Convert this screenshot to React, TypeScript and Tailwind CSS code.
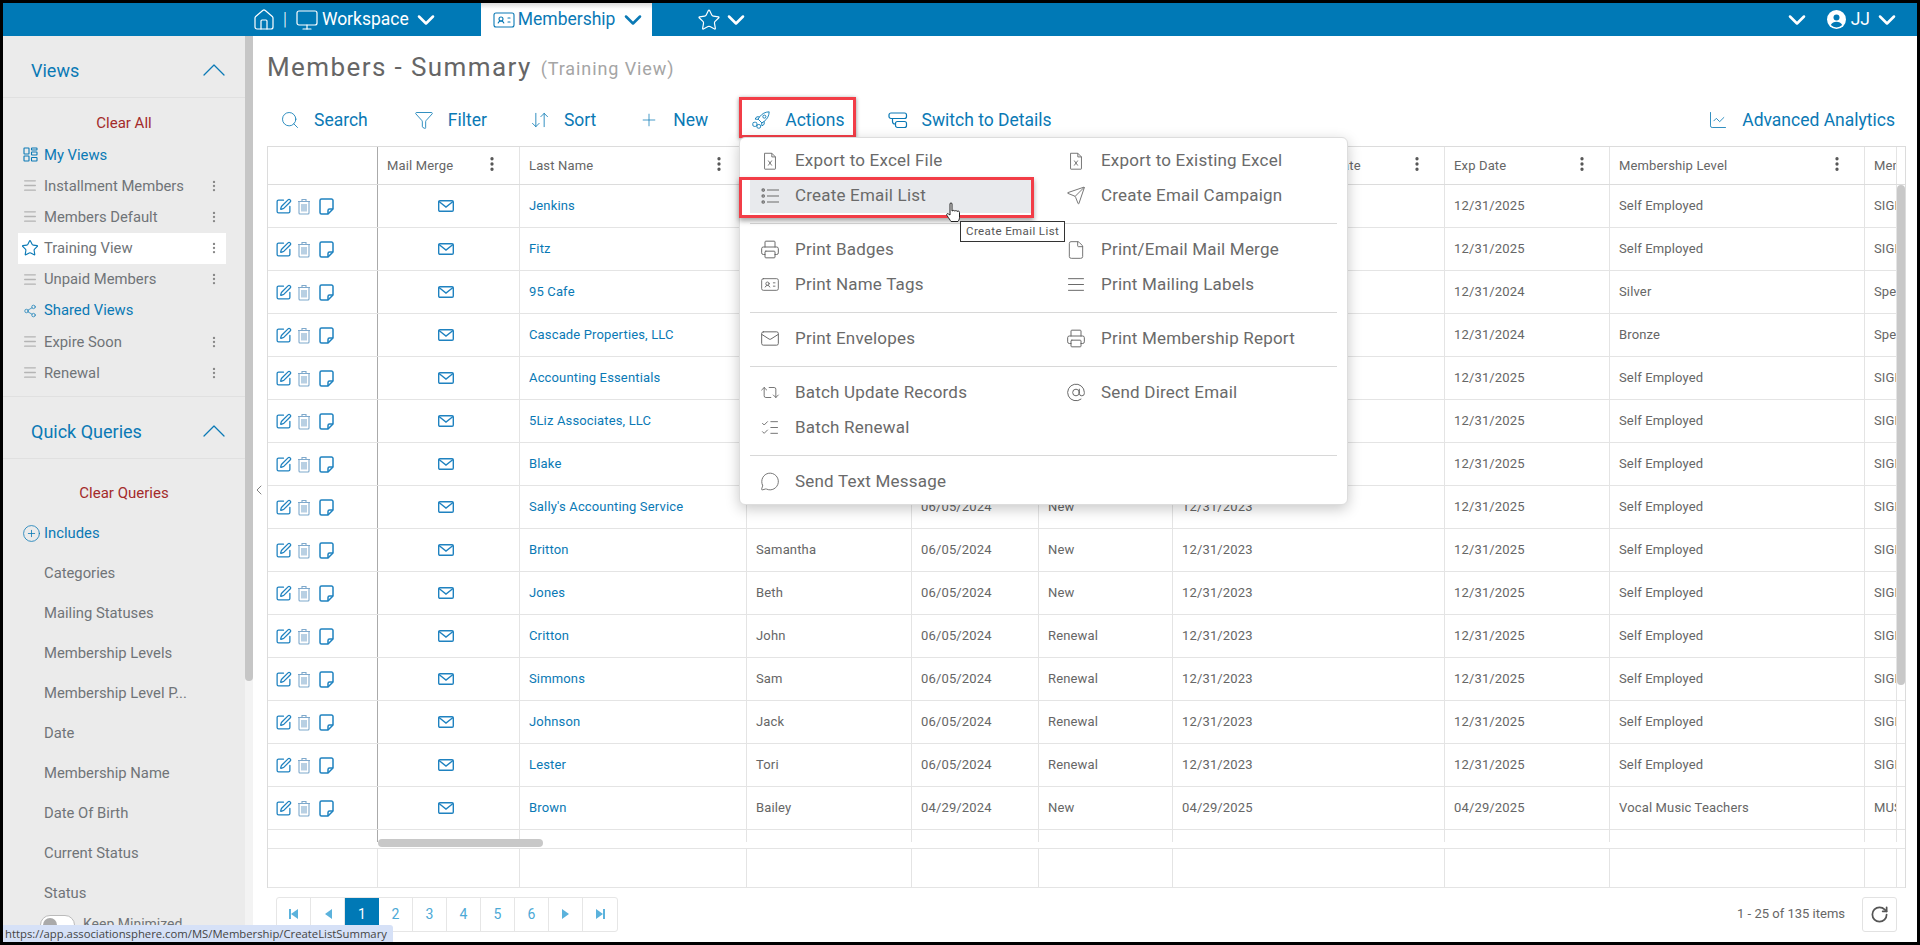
import {
  ArrowDownUp,
  AtSign,
  ChartLine,
  ChevronDown,
  ChevronLeft,
  ChevronUp,
  CirclePlus,
  EllipsisVertical,
  File,
  Funnel,
  House,
  IdCard,
  ListChecks,
  Mail,
  Menu,
  MessageCircle,
  Monitor,
  Plus,
  Printer,
  Repeat2,
  RotateCw,
  Search,
  Send,
  Share2,
  SquarePen,
  Star,
  AlignJustify,
} from "lucide-react";
import type { ReactNode } from "react";

const gridCols = "grid grid-cols-[110px_142px_227px_165px_127px_134px_272px_165px_255px_32px]";

function XlsIcon() {
  return (
    <svg width="22" height="22" viewBox="0 0 22 22" fill="none" stroke="currentColor" strokeWidth="1">
      <path d="M5 2.500h8l4 4v13a.5.5 0 0 1-.5.5h-11a.5.5 0 0 1-.5-.5z" />
      <path d="M13 2.500v4h4" />
      <path d="M9 10.500l4 5.500M13 10.500l-4 5.500" />
    </svg>
  );
}

function EmailListIcon() {
  return (
    <svg width="20" height="20" viewBox="0 0 20 20" fill="none" stroke="currentColor" strokeWidth="1.2">
      <circle cx="3.200" cy="4" r="1.200" />
      <circle cx="3.200" cy="10" r="1.200" />
      <circle cx="3.200" cy="16" r="1.200" />
      <path d="M7 4h12M7 10h12M7 16h12" />
    </svg>
  );
}

function RocketIcon() {
  return (
    <svg width="22" height="22" viewBox="0 0 22 22" fill="none" stroke="currentColor" strokeWidth="1">
      <path d="M20 2c-4.500.2-7.800 2-10.500 5.500L7.800 10l4.200 4.200 2.500-1.700C18 9.800 19.800 6.500 20 2z" />
      <circle cx="14.700" cy="7.300" r="1.700" />
      <path d="M9.500 7.500H6.300L4.500 10l3.300.3M14.500 12.500v3.200L12 17.500l-.3-3.300" />
      <rect x="2" y="13.500" width="4.500" height="4.500" rx="1.500" />
      <rect x="6.500" y="16" width="4" height="4" rx="1.500" />
    </svg>
  );
}

function TrashIcon() {
  return (
    <svg width="14" height="17" viewBox="0 0 14 17" fill="none" stroke="#7fa9cc" strokeWidth="1.100">
      <path d="M1 3.500h12M5 3.500V1.500h4v2" />
      <path d="M2 3.500v11.500a1 1 0 0 0 1 1h8a1 1 0 0 0 1-1V3.500" />
      <path d="M5 6v7.500M7 6v7.500M9 6v7.500" />
    </svg>
  );
}

function NoteIcon() {
  return (
    <svg width="15" height="17" viewBox="0 0 15 17" fill="none" stroke="#1f82c0" strokeWidth="1.500">
      <path d="M2.500 1h10a1.500 1.500 0 0 1 1.500 1.500V11l-5 5H2.500A1.500 1.500 0 0 1 1 14.500v-12A1.500 1.500 0 0 1 2.500 1z" />
      <path d="M14 11h-3.500A1.500 1.500 0 0 0 9 12.500V16" />
    </svg>
  );
}

function EnvelopeIcon() {
  return (
    <svg width="16" height="12" viewBox="0 0 16 12" fill="none" stroke="#1f82c0" strokeWidth="1.400">
      <rect x="0.700" y="0.700" width="14.600" height="10.600" rx="1.200" />
      <path d="M1 1.500l7 5.500 7-5.500" />
    </svg>
  );
}

function GridViewsIcon() {
  return (
    <svg width="15" height="15" viewBox="0 0 15 15" fill="none" stroke="currentColor" strokeWidth="1.100">
      <rect x="1" y="1" width="5" height="6" rx="0.500" />
      <rect x="1" y="9" width="5" height="5" rx="0.500" />
      <rect x="8.500" y="1" width="5.500" height="2" rx="0.500" />
      <rect x="8.500" y="5" width="5.500" height="3" rx="0.500" />
      <rect x="8.500" y="10.500" width="5.500" height="3.500" rx="0.500" />
    </svg>
  );
}

function SwitchIcon() {
  return (
    <svg width="20" height="20" viewBox="0 0 20 20" fill="none" stroke="currentColor" strokeWidth="1.200">
      <rect x="1" y="3" width="17.500" height="5.500" rx="2" />
      <rect x="7.500" y="11.500" width="11" height="6" rx="2" />
      <path d="M4.500 8.500v3a2.500 2.500 0 0 0 2.500 2.500" />
    </svg>
  );
}

function UserCircle() {
  return (
    <svg width="19" height="19" viewBox="0 0 19 19">
      <circle cx="9.500" cy="9.500" r="9.500" fill="white" />
      <circle cx="9.500" cy="7.500" r="3" fill="#0079b6" />
      <path d="M3.800 15c1.200-2.400 3.300-3.200 5.700-3.200s4.500.8 5.700 3.200a8 8 0 0 1-11.400 0z" fill="#0079b6" />
    </svg>
  );
}

function PagerArrow({ dir, bar }: { dir: "left" | "right"; bar?: boolean }) {
  return (
    <svg width="12" height="12" viewBox="0 0 12 12" fill="#5bb2dc">
      {dir === "left" ? <path d="M10 1v10L3 6z" /> : <path d="M2 1v10l7-5z" />}
      {bar && (dir === "left" ? <rect x="1" y="1" width="2" height="10" /> : <rect x="9" y="1" width="2" height="10" />)}
    </svg>
  );
}

function HeadChevron({ className }: { className?: string }) {
  return <ChevronDown size={28} strokeWidth={2.2} className={className} />;
}

function ToolButton({ icon, label, boxed }: { icon: ReactNode; label: string; boxed?: boolean }) {
  return (
    <button className="relative flex items-center text-[17.5px] text-[#0a79b5]">
      <span className="mr-[14px] flex h-[20px] w-[20px] items-center justify-center">{icon}</span>
      {label}
      {boxed && (
        <span className="absolute -bottom-[5px] -left-[12px] -right-[11px] -top-[10px] border-[3px] border-[#f23d47] shadow-[0_1px_4px_rgba(0,0,0,0.45)]" />
      )}
    </button>
  );
}

const views = [
  { label: "My Views", link: true, icon: <GridViewsIcon /> },
  { label: "Installment Members" },
  { label: "Members Default" },
  { label: "Training View", active: true, icon: <Star size={18} strokeWidth={1.5} className="text-[#0a79b5]" /> },
  { label: "Unpaid Members" },
  { label: "Shared Views", link: true, icon: <Share2 size={14} strokeWidth={1.2} /> },
  { label: "Expire Soon" },
  { label: "Renewal" },
];

const queries = [
  "Categories",
  "Mailing Statuses",
  "Membership Levels",
  "Membership Level P...",
  "Date",
  "Membership Name",
  "Date Of Birth",
  "Current Status",
  "Status",
];

function SectionHead({ title }: { title: string }) {
  return (
    <div className="flex h-[62px] items-center justify-between border-b border-[#e0e0e0] pl-[28px] pr-[11px] pt-[7px] text-[18px] text-[#0a79b5]">
      {title}
      <ChevronUp size={40} strokeWidth={0.75} />
    </div>
  );
}

function Sidebar() {
  return (
    <aside className="relative flex w-[250px] shrink-0 overflow-hidden bg-[#ebebeb]">
      <div className="w-[242px] shrink-0 text-[14.8px] text-[#707478]">
        <SectionHead title="Views" />
        <div className="pb-[6px] pt-[15px] text-center text-[15px] leading-[20px] text-[#a32a2a]">Clear All</div>
        <div className="h-[258px] border-b border-[#e0e0e0]">
          {views.map((v) => (
            <div
              key={v.label}
              className={`ml-[15px] mr-[19px] flex h-[31.2px] items-center pl-[4px] pr-[5px] ${v.active ? "bg-white" : ""} ${v.link ? "text-[#0a79b5]" : ""}`}
            >
              <span className="mr-[6px] flex w-[16px] justify-center text-[#b4b4b4]">
                {v.icon ? <span className={v.link ? "text-[#0a79b5]" : ""}>{v.icon}</span> : <Menu size={17} strokeWidth={2} />}
              </span>
              <span className="flex-1">{v.label}</span>
              {!v.link && <EllipsisVertical size={14} className="text-[#888]" />}
            </div>
          ))}
        </div>
        <SectionHead title="Quick Queries" />
        <div className="h-[54px] pt-[24px] text-center text-[15px] leading-[20px] text-[#a32a2a]">Clear Queries</div>
        <div className="flex h-[40px] items-center pl-[19px] text-[#0a79b5]">
          <CirclePlus size={19} strokeWidth={1} className="mr-[3px]" />
          Includes
        </div>
        {queries.map((q) => (
          <div key={q} className="flex h-[40px] items-center pl-[41px]">
            {q}
          </div>
        ))}
        <div className="flex items-center pl-[37px] pt-[1px]">
          <span className="mr-[8px] flex h-[20px] w-[35px] items-center rounded-full border border-[#bbb] bg-white pl-[2px]">
            <span className="h-[14px] w-[14px] rounded-full bg-[#aaa]" />
          </span>
          <span className="text-[14px]">Keep Minimized</span>
        </div>
      </div>
      <div className="w-[8px] bg-[#f3f3f3]">
        <div className="h-[645px] rounded-b-[4px] bg-[#c6c6c6]" />
      </div>
    </aside>
  );
}

type Row = { last: string; first: string; date: string; type: string; prev: string; exp: string; level: string; mem: string };

// rows 1-7 sit under the open menu, only their outer columns show
const rows: Row[] = [
  { last: "Jenkins", first: "", date: "", type: "", prev: "", exp: "12/31/2025", level: "Self Employed", mem: "SIGN" },
  { last: "Fitz", first: "", date: "", type: "", prev: "", exp: "12/31/2025", level: "Self Employed", mem: "SIGN" },
  { last: "95 Cafe", first: "", date: "", type: "", prev: "", exp: "12/31/2024", level: "Silver", mem: "Spec" },
  { last: "Cascade Properties, LLC", first: "", date: "", type: "", prev: "", exp: "12/31/2024", level: "Bronze", mem: "Spec" },
  { last: "Accounting Essentials", first: "", date: "", type: "", prev: "", exp: "12/31/2025", level: "Self Employed", mem: "SIGN" },
  { last: "5Liz Associates, LLC", first: "", date: "", type: "", prev: "", exp: "12/31/2025", level: "Self Employed", mem: "SIGN" },
  { last: "Blake", first: "", date: "", type: "", prev: "", exp: "12/31/2025", level: "Self Employed", mem: "SIGN" },
  { last: "Sally's Accounting Service", first: "", date: "06/05/2024", type: "New", prev: "12/31/2023", exp: "12/31/2025", level: "Self Employed", mem: "SIGN" },
  { last: "Britton", first: "Samantha", date: "06/05/2024", type: "New", prev: "12/31/2023", exp: "12/31/2025", level: "Self Employed", mem: "SIGN" },
  { last: "Jones", first: "Beth", date: "06/05/2024", type: "New", prev: "12/31/2023", exp: "12/31/2025", level: "Self Employed", mem: "SIGN" },
  { last: "Critton", first: "John", date: "06/05/2024", type: "Renewal", prev: "12/31/2023", exp: "12/31/2025", level: "Self Employed", mem: "SIGN" },
  { last: "Simmons", first: "Sam", date: "06/05/2024", type: "Renewal", prev: "12/31/2023", exp: "12/31/2025", level: "Self Employed", mem: "SIGN" },
  { last: "Johnson", first: "Jack", date: "06/05/2024", type: "Renewal", prev: "12/31/2023", exp: "12/31/2025", level: "Self Employed", mem: "SIGN" },
  { last: "Lester", first: "Tori", date: "06/05/2024", type: "Renewal", prev: "12/31/2023", exp: "12/31/2025", level: "Self Employed", mem: "SIGN" },
  { last: "Brown", first: "Bailey", date: "04/29/2024", type: "New", prev: "04/29/2025", exp: "04/29/2025", level: "Vocal Music Teachers", mem: "MUSIC" },
];

const cell = "flex items-center overflow-hidden whitespace-nowrap border-r border-[#e4e4e4] pl-[9px]";

function HeadCell({ label }: { label: string }) {
  return (
    <div className={`${cell} relative justify-between pr-[18px]`}>
      <span>{label}</span>
      <EllipsisVertical size={18} strokeWidth={2.4} className="-mt-[4px] shrink-0 text-[#555]" />
    </div>
  );
}

function MembersTable() {
  return (
    <div className="relative mr-[11px] overflow-hidden border-l border-r border-t border-[#dcdcdc] text-[13px] tracking-[0.15px] text-[#666]">
      <div className={`${gridCols} h-[38px] border-b border-[#dcdcdc]`}>
        <div className="border-r border-[#aaa]" />
        <HeadCell label="Mail Merge" />
        <HeadCell label="Last Name" />
        <HeadCell label="First Name" />
        <HeadCell label="Join Date" />
        <HeadCell label="Type" />
        <HeadCell label="Original Membership Exp Date" />
        <HeadCell label="Exp Date" />
        <HeadCell label="Membership Level" />
        <div className={cell}>Mem</div>
      </div>
      <div className="h-[663px] overflow-hidden">
        {rows.map((r) => (
          <div key={r.last} className={`${gridCols} h-[43px] border-b border-[#e4e4e4]`}>
            <div className="flex items-center border-r border-[#aaa] pl-[7px] text-[#1f82c0]">
              <SquarePen size={17} strokeWidth={1.8} />
              <span className="ml-[5px]"><TrashIcon /></span>
              <span className="ml-[8px]"><NoteIcon /></span>
            </div>
            <div className="flex items-center justify-center border-r border-[#e4e4e4] pr-[5px]">
              <EnvelopeIcon />
            </div>
            <div className={`${cell} text-[#0a79b5]`}>{r.last}</div>
            <div className={cell}>{r.first}</div>
            <div className={cell}>{r.date}</div>
            <div className={cell}>{r.type}</div>
            <div className={cell}>{r.prev}</div>
            <div className={cell}>{r.exp}</div>
            <div className={cell}>{r.level}</div>
            <div className={cell}>{r.mem}</div>
          </div>
        ))}
        <div className={`${gridCols} h-[12px]`}>
          <div className="border-r border-[#aaa]" />
          {Array.from({ length: 9 }).map((_, i) => (
            <div key={i} className="border-r border-[#e4e4e4]" />
          ))}
        </div>
      </div>
      {/* grid scrollbars */}
      <div className="absolute bottom-[41px] left-[110px] h-[8px] w-[165px] rounded-[4px] bg-[#c8c8c8]" />
      <div className="absolute right-0 top-[38px] h-[500px] w-[8px] rounded-[4px] bg-[#c8c8c8]" />
      <div className={`${gridCols} h-[40px] border-b border-t border-[#e4e4e4]`}>
        {Array.from({ length: 10 }).map((_, i) => (
          <div key={i} className="border-r border-[#e4e4e4]" />
        ))}
      </div>
    </div>
  );
}

function Pager() {
  const cellBox = "flex h-full w-[34px] items-center justify-center border-r border-[#e6e6e6]";
  return (
    <div className="mr-[11px] flex flex-1 items-center justify-between pb-[2px] pl-[9px] pr-[9px]">
      <div className="flex h-[35px] items-center overflow-hidden rounded-[3px] border border-[#e6e6e6] text-[14px] text-[#4ca9d6]">
        <span className={cellBox}><PagerArrow dir="left" bar /></span>
        <span className={cellBox}><PagerArrow dir="left" /></span>
        <span className="flex h-full w-[34px] items-center justify-center bg-[#0079b6] text-white">1</span>
        {["2", "3", "4", "5", "6"].map((n) => (
          <span key={n} className={cellBox}>{n}</span>
        ))}
        <span className={cellBox}><PagerArrow dir="right" /></span>
        <span className="flex h-full w-[34px] items-center justify-center"><PagerArrow dir="right" bar /></span>
      </div>
      <div className="flex items-center text-[13px] text-[#666]">
        1 - 25 of 135 items
        <span className="ml-[17px] flex h-[35px] w-[35px] items-center justify-center rounded-[3px] border border-[#e2e2e2] text-[#555]">
          <RotateCw size={19} strokeWidth={2.2} />
        </span>
      </div>
    </div>
  );
}

type MenuItem = { icon: ReactNode; label: string; hot?: boolean } | null;

const menuSections: MenuItem[][] = [
  [
    { icon: <XlsIcon />, label: "Export to Excel File" },
    { icon: <XlsIcon />, label: "Export to Existing Excel" },
    { icon: <EmailListIcon />, label: "Create Email List", hot: true },
    { icon: <Send size={21} strokeWidth={1.1} />, label: "Create Email Campaign" },
  ],
  [
    { icon: <Printer size={21} strokeWidth={1.2} />, label: "Print Badges" },
    { icon: <File size={22} strokeWidth={1.1} />, label: "Print/Email Mail Merge" },
    { icon: <IdCard size={23} strokeWidth={1.1} />, label: "Print Name Tags" },
    { icon: <AlignJustify size={21} strokeWidth={1.2} />, label: "Print Mailing Labels" },
  ],
  [
    { icon: <Mail size={21} strokeWidth={1.2} />, label: "Print Envelopes" },
    { icon: <Printer size={21} strokeWidth={1.2} />, label: "Print Membership Report" },
  ],
  [
    { icon: <Repeat2 size={23} strokeWidth={1.1} />, label: "Batch Update Records" },
    { icon: <AtSign size={21} strokeWidth={1.2} />, label: "Send Direct Email" },
    { icon: <ListChecks size={21} strokeWidth={1.1} />, label: "Batch Renewal" },
    null,
  ],
  [{ icon: <MessageCircle size={21} strokeWidth={1.1} />, label: "Send Text Message" }, null],
];

function ActionsMenu() {
  return (
    <div className="absolute left-[739px] top-[137px] w-[609px] rounded-[6px] border border-[#ddd] bg-white px-[10px] pb-[5px] pt-[5px] text-[17px] tracking-[0.2px] text-[#6a6a6a] shadow-[0_4px_14px_rgba(0,0,0,0.22)]">
      {menuSections.map((items, i) => (
        <div key={i}>
          {i > 0 && <div className="mb-[8px] mt-[10px] h-px bg-[#d8d8d8]" />}
          <div className="grid grid-cols-[306px_1fr]">
            {items.map((item, j) =>
              item ? (
                <div
                  key={j}
                  className={`relative flex h-[35px] items-center pl-[10px] ${item.hot ? "w-[284px] bg-[#e8eaed]" : ""}`}
                >
                  <span className="mr-[15px] flex w-[20px] justify-center">{item.icon}</span>
                  {item.label}
                  {item.hot && (
                    <span className="absolute -bottom-[5px] -left-[11px] -top-[1px] right-0 border-[3px] border-[#f23d47] shadow-[0_3px_5px_rgba(0,0,0,0.35)]" />
                  )}
                </div>
              ) : (
                <div key={j} />
              ),
            )}
          </div>
        </div>
      ))}
    </div>
  );
}

function HandCursor() {
  return (
    <svg className="absolute left-[945px] top-[202px]" width="16" height="22" viewBox="0 0 16 22" fill="white" stroke="#222" strokeWidth="1">
      <path d="M5 2c0-1.500 2-1.500 2 0v7l1-.5c1-.3 1.500.2 1.500.5l1-.3c1-.2 1.500.3 1.500.6l1-.2c1-.1 1.500.5 1.500 1.400v5c0 2-1 3-1.500 4H6c-1-1.500-2-3-4-6-1-1.500.5-2.500 1.500-1.500L5 13z" />
    </svg>
  );
}

export default function App() {
  return (
    <div className="relative flex h-[945px] w-[1920px] flex-col overflow-hidden bg-black pb-[3px] pl-[3px] pr-[3px] pt-[3px] font-['Roboto',sans-serif]">
      <header className="flex h-[33px] shrink-0 items-center bg-[#0079b6] text-[17.5px] text-white">
        <House size={24} strokeWidth={1.2} className="ml-[249px]" />
        <span className="ml-[7px] mr-[8px] font-light">|</span>
        <Monitor size={24} strokeWidth={1.2} />
        <span className="ml-[3px]">Workspace</span>
        <HeadChevron className="ml-[3px]" />
        <div className="ml-[41px] flex h-full w-[171px] items-center bg-linear-to-b from-[#dcdcdc] to-white to-[18%] pl-[11px] text-[#0a79b5]">
          <IdCard size={24} strokeWidth={1.1} />
          <span className="ml-[2px]">Membership</span>
          <HeadChevron className="ml-[4px]" />
        </div>
        <Star size={24} strokeWidth={1.2} className="ml-[45px]" />
        <HeadChevron className="ml-[1px]" />
        <HeadChevron className="ml-auto" />
        <span className="ml-[16px]"><UserCircle /></span>
        <span className="ml-[5px]">JJ</span>
        <HeadChevron className="ml-[3px] mr-[16px]" />
      </header>

      <div className="flex min-h-0 flex-1 bg-white">
        <Sidebar />
        <main className="relative flex min-w-0 flex-1 flex-col pl-[14px]">
          <div className="flex h-[62px] shrink-0 items-center">
            <h1 className="text-[26px] tracking-[1.4px] text-[#666]">Members - Summary</h1>
            <span className="ml-[9px] mt-[3px] text-[18px] tracking-[0.9px] text-[#a5a5a5]">(Training View)</span>
          </div>
          <div className="mb-[4px] flex h-[44px] shrink-0 items-center gap-[43px] pl-[13px] pr-[22px]">
            <div className="mr-[3px]">
              <ToolButton icon={<Search size={22} strokeWidth={1} />} label="Search" />
            </div>
            <ToolButton icon={<Funnel size={22} strokeWidth={1} />} label="Filter" />
            <ToolButton icon={<ArrowDownUp size={24} strokeWidth={1} />} label="Sort" />
            <ToolButton icon={<Plus size={28} strokeWidth={0.9} />} label="New" />
            <ToolButton icon={<RocketIcon />} label="Actions" boxed />
            <ToolButton icon={<SwitchIcon />} label="Switch to Details" />
            <div className="ml-auto">
              <ToolButton icon={<ChartLine size={22} strokeWidth={1} />} label="Advanced Analytics" />
            </div>
          </div>
          <MembersTable />
          <Pager />
          <ChevronLeft size={16} strokeWidth={1.4} className="absolute -left-[2px] top-[446px] text-[#777]" />
        </main>
      </div>

      <ActionsMenu />
      <HandCursor />
      <div className="absolute left-[960px] top-[221px] border border-[#333] bg-white px-[5px] py-[1px] text-[11.5px] tracking-[0.4px] text-[#555]">
        Create Email List
      </div>
      <div className="absolute bottom-[3px] left-[3px] h-[17px] w-[390px] rounded-tr-[3px] bg-[#d6e1f7] pl-[2px] font-['Open_Sans',sans-serif] text-[11.3px] leading-[18px] text-[#444]">
        https://app.associationsphere.com/MS/Membership/CreateListSummary
      </div>
    </div>
  );
}
